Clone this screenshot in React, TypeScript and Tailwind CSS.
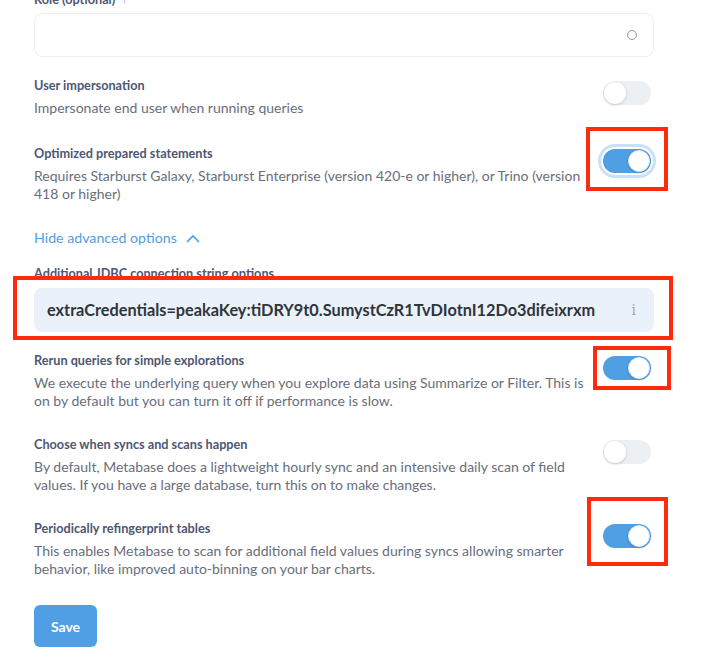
import React from "react";

function Toggle({ on, focus }: { on?: boolean; focus?: boolean }) {
  return (
    <div
      className={`relative w-[48px] h-[24px] shrink-0 rounded-full ${
        on ? "bg-[#509ee3]" : "bg-[#edf0f3]"
      } ${focus ? "ring-[3px] ring-[#c9e0f7] ring-offset-[2px] ring-offset-white" : ""}`}
    >
      <div
        className={`absolute top-[1px] w-[22px] h-[22px] rounded-full bg-white shadow-[0_1px_3px_rgba(0,0,0,0.18)] ${
          on ? "right-[1px] border border-[#dbe7f5]" : "left-[1px]"
        }`}
      />
    </div>
  );
}

function Setting({
  title,
  desc,
  on,
  focus,
  className,
}: {
  title: string;
  desc: string;
  on?: boolean;
  focus?: boolean;
  className?: string;
}) {
  return (
    <div className={`flex items-start justify-between pr-[3px] ${className ?? ""}`}>
      <div className="w-[565px]">
        <div className="text-[12.7px] leading-[16px] font-bold text-[#4c5773]">{title}</div>
        <div className="mt-[6px] text-[14px] leading-[18px] text-[#696e7b]">{desc}</div>
      </div>
      <div className="mt-[4px]">
        <Toggle on={on} focus={focus} />
      </div>
    </div>
  );
}

export default function App() {
  return (
    <div className="relative h-[659px] w-[726px] overflow-hidden bg-white font-['Lato',sans-serif]">
      <div className="ml-[34px] w-[620px]">
        {/* Role (cut off at top) */}
        <div className="-mt-[9px] flex items-center gap-2 text-[12.7px] leading-[16px] font-bold text-[#4c5773]">
          Role (optional)
          <span className="text-[10px] font-normal text-[#b8bbc3]">i</span>
        </div>
        <div className="mt-[6px] flex h-[44px] items-center justify-end rounded-[8px] border border-[#eeeeee] bg-white pr-[16px]">
          <div className="h-[10px] w-[10px] rounded-full border-[1.5px] border-[#8d91a8]" />
        </div>

        <Setting
          className="mt-[20px] mb-[28px]"
          title="User impersonation"
          desc="Impersonate end user when running queries"
        />
        <Setting
          title="Optimized prepared statements"
          desc="Requires Starburst Galaxy, Starburst Enterprise (version 420-e or higher), or Trino (version 418 or higher)"
          on
          focus
        />

        <div className="mt-[25px] flex items-center gap-[9px] text-[14.2px] leading-[20px] text-[#509ee3]">
          Hide advanced options
          <svg width="14" height="9" viewBox="0 0 14 9" fill="none">
            <path d="M1 8 L7 2 L13 8" stroke="#509ee3" strokeWidth="1.6" />
          </svg>
        </div>

        <div className="mt-[17px] text-[12.7px] leading-[16px] font-bold text-[#4c5773]">
          Additional JDBC connection string options
        </div>
        <div className="mt-[7px] flex h-[44px] items-center justify-between rounded-[8px] bg-[#ebf1fb] pl-[13px] pr-[18px]">
          <span className="text-[16.3px] font-bold text-[#2e353b]">
            extraCredentials=peakaKey:tiDRY9t0.SumystCzR1TvDIotnI12Do3difeixrxm
          </span>
          <span className="font-['DejaVu_Serif',serif] text-[14px] text-[#a4a8b5]">i</span>
        </div>

        <Setting
          className="mt-[20px] mb-[26px]"
          title="Rerun queries for simple explorations"
          desc="We execute the underlying query when you explore data using Summarize or Filter. This is on by default but you can turn it off if performance is slow."
          on
        />
        <Setting
          className="mb-[26px]"
          title="Choose when syncs and scans happen"
          desc="By default, Metabase does a lightweight hourly sync and an intensive daily scan of field values. If you have a large database, turn this on to make changes."
        />
        <Setting
          title="Periodically refingerprint tables"
          desc="This enables Metabase to scan for additional field values during syncs allowing smarter behavior, like improved auto-binning on your bar charts."
          on
        />

        <button className="mt-[27px] h-[42px] w-[63px] rounded-[6px] bg-[#509ee3] text-[14px] font-bold text-white">
          Save
        </button>
      </div>

      {/* red annotation boxes */}
      <div className="absolute left-[586px] top-[127px] h-[64px] w-[82px] border-4 border-[#fe2b0c]" />
      <div className="absolute left-[13px] top-[276px] h-[64px] w-[660px] border-4 border-[#fe2b0c]" />
      <div className="absolute left-[593px] top-[346px] h-[44px] w-[78px] border-4 border-[#fe2b0c]" />
      <div className="absolute left-[587px] top-[497px] h-[69px] w-[81px] border-4 border-[#fe2b0c]" />
    </div>
  );
}
